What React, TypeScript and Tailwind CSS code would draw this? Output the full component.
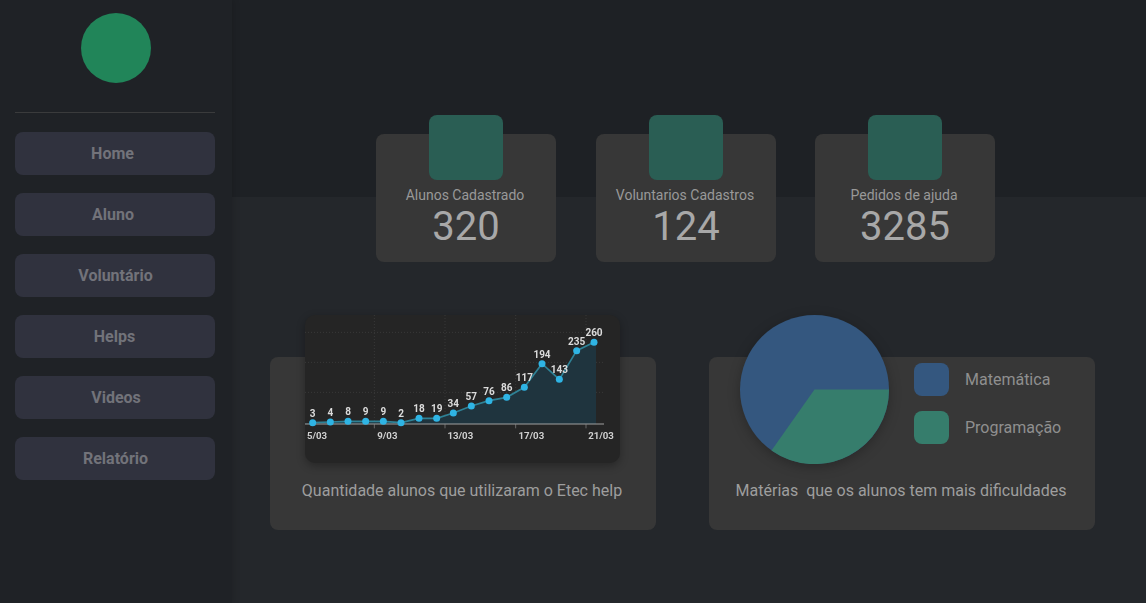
const menu = [
  { label: "Home", cls: "pr-[5px]" },
  { label: "Aluno", cls: "pr-[4px]" },
  { label: "Voluntário", cls: "pl-[1px]" },
  { label: "Helps", cls: "pr-[1px]" },
  { label: "Videos", cls: "pl-[2px]" },
  { label: "Relatório", cls: "pl-[1px]" },
];

const stats = [
  { title: "Alunos Cadastrado", value: "320", cls: "ml-[144px]" },
  { title: "Voluntarios Cadastros", value: "124", cls: "ml-[40px]" },
  { title: "Pedidos de ajuda", value: "3285", cls: "ml-[39px]" },
];

const pts: [number, number, string][] = [
  [68, 353, "3"], [121, 351, "4"], [174, 349, "8"], [227, 349, "9"], [280, 349, "9"], [333, 353, "2"],
  [387, 340, "18"], [440, 340, "19"], [490, 324, "34"], [544, 303, "57"], [597, 287, "76"], [650, 277, "86"],
  [703, 247, "117"], [756, 176, "194"], [808, 223, "143"], [860, 137, "235"], [912, 112, "260"],
];

function Chart() {
  const line = pts.map((p) => `${p[0]},${p[1]}`).join(" ");
  return (
    <svg viewBox="45 30 945 444" className="block h-[148px] w-[315px] blur-[0.4px]">
      <g stroke="#444444" strokeWidth="2" strokeDasharray="3 6">
        {[82, 172, 262].map((y) => <line key={y} x1="45" x2="940" y1={y} y2={y} />)}
        {[253, 465, 677, 888].map((x) => <line key={x} x1={x} x2={x} y1="30" y2="355" />)}
      </g>
      <polygon points={`45,354 ${line} 918,112 918,357 45,357`} fill="#1f343e" />
      <line x1="45" x2="942" y1="357" y2="357" stroke="#a0a0a0" strokeWidth="3" />
      {[253, 465, 677, 888].map((x) => <line key={x} x1={x} x2={x} y1="357" y2="370" stroke="#8c8c8c" strokeWidth="2" />)}
      <polyline points={line} fill="none" stroke="#2f8296" strokeWidth="5" />
      {pts.map((p) => <circle key={p[0]} cx={p[0]} cy={p[1]} r="10.5" fill="#2fb4e4" />)}
      <g fontFamily="Roboto, sans-serif" fontSize="30" fontWeight="700" fill="#dcdcdc" textAnchor="middle">
        {pts.map((p) => <text key={p[0]} x={p[0]} y={p[1] - 18}>{p[2]}</text>)}
      </g>
      <g fontFamily="Roboto, sans-serif" fontSize="29" fontWeight="700" fill="#d0d0d0" textAnchor="middle">
        <text x="81" y="403">5/03</text>
        <text x="292" y="403">9/03</text>
        <text x="511" y="403">13/03</text>
        <text x="724" y="403">17/03</text>
        <text x="933" y="403">21/03</text>
      </g>
    </svg>
  );
}

function Pie() {
  return (
    <svg viewBox="0 0 149 149" className="block h-[149px] w-[149px] drop-shadow-[0_3px_6px_rgba(0,0,0,0.25)]">
      <circle cx="74.5" cy="74.5" r="74.5" fill="#34577f" />
      <path d="M74.5 74.5 L149 74.5 A74.5 74.5 0 0 1 31.5 135.4 Z" fill="#367d6c" />
    </svg>
  );
}

export default function App() {
  return (
    <div className="flex h-[603px] w-[1146px] overflow-hidden bg-[#24272b] font-['Roboto',sans-serif]">
      <aside className="z-10 flex w-[232px] shrink-0 flex-col bg-[#1f2226] px-[15px] shadow-[2px_0_6px_rgba(0,0,0,0.12)]">
        <div className="mt-[13px] ml-[66px] h-[70px] w-[70px] rounded-full bg-[#218559]" />
        <div className="mt-[29px] h-px w-[200px] bg-[#3a3b3c]" />
        <nav className="mt-[19px] flex flex-col gap-[18px]">
          {menu.map((m) => (
            <div
              key={m.label}
              className={`flex h-[43px] w-[200px] items-center justify-center rounded-[8px] bg-[#30323e] text-[16px] font-bold text-[#72737a] ${m.cls}`}
            >
              {m.label}
            </div>
          ))}
        </nav>
      </aside>
      <main className="flex min-w-0 flex-1 flex-col">
        <div className="h-[197px] shrink-0 bg-[#1e2125]" />
        <div className="-mt-[63px] flex">
          {stats.map((s) => (
            <div key={s.title} className={`relative flex h-[128px] w-[180px] flex-col items-center rounded-[8px] bg-[#373737] pt-[52px] ${s.cls}`}>
              <div className="absolute -top-[19px] left-[53px] h-[65px] w-[74px] rounded-[8px] bg-[#2a5e54]" />
              <div className="pr-[2px] text-[14px] leading-[18px] text-[#999999]">{s.title}</div>
              <div className="mt-px text-[40px] leading-[44px] text-[#a8a8a8]">{s.value}</div>
            </div>
          ))}
        </div>
        <div className="mt-[95px] flex">
          <section className="ml-[38px] flex h-[173px] w-[386px] flex-col items-center rounded-[8px] bg-[#373737]">
            <div className="-mt-[42px] ml-[-1px] overflow-hidden rounded-[10px] bg-[#252525] shadow-[0_3px_8px_rgba(0,0,0,0.3)]">
              <Chart />
            </div>
            <p className="mt-[18px] pr-[2px] text-[16px] leading-[20px] text-[#9e9e9e]">Quantidade alunos que utilizaram o Etec help</p>
          </section>
          <section className="ml-[53px] flex h-[173px] w-[386px] flex-col rounded-[8px] bg-[#373737]">
            <div className="flex">
              <div className="-mt-[42px] ml-[31px]"><Pie /></div>
              <div className="mt-[6px] ml-[25px] flex flex-col gap-[15px]">
                <div className="flex items-center gap-[16px]">
                  <div className="h-[33px] w-[35px] rounded-[8px] bg-[#34577f]" />
                  <span className="text-[16px] text-[#8f8f8f]">Matemática</span>
                </div>
                <div className="flex items-center gap-[16px]">
                  <div className="h-[33px] w-[35px] rounded-[8px] bg-[#367d6c]" />
                  <span className="pt-px text-[16px] text-[#8f8f8f]">Programação</span>
                </div>
              </div>
            </div>
            <p className="mt-[17px] whitespace-pre pr-[2px] text-center text-[16px] leading-[20px] text-[#9e9e9e]">Matérias  que os alunos tem mais dificuldades</p>
          </section>
        </div>
      </main>
    </div>
  );
}
